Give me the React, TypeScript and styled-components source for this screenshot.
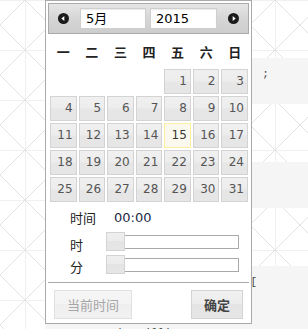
import React from 'react'
import styled, { createGlobalStyle } from 'styled-components'

const GlobalStyle = createGlobalStyle`
  html, body {
    margin: 0;
    padding: 0;
    background: #fff;
    overflow: hidden;
  }
  body {
    font-family: "DejaVu Sans", "Noto Sans CJK SC", sans-serif;
  }
`

const Page = styled.div`
  position: relative;
  width: 308px;
  height: 329px;
  overflow: hidden;
  background-color: #fff;
  background-image:
    linear-gradient(45deg, transparent calc(50% - 0.6px), #e2e2e2 50%, transparent calc(50% + 0.6px)),
    linear-gradient(-45deg, transparent calc(50% - 0.6px), #e2e2e2 50%, transparent calc(50% + 0.6px)),
    linear-gradient(90deg, transparent 25px, #f0f0f0 25px, #f0f0f0 26px, transparent 26px),
    linear-gradient(180deg, #f0f0f0 0, #f0f0f0 1px, transparent 1px);
  background-size: 50px 50px;
  background-position: 0 25px, 0 25px, 0 0, 0 0;
`

const CodeColumn = styled.div`
  display: flex;
  flex-direction: column;
  margin-left: 45px;
`

const Gap = styled.div<{ $h: number }>`
  height: ${p => p.$h}px;
`

const CodeBlock = styled.pre<{ $h: number; $lh?: number; $pt?: number; $pl?: number }>`
  margin: 0;
  height: ${p => p.$h}px;
  box-sizing: border-box;
  padding: ${p => p.$pt ?? 9}px 0 0 ${p => p.$pl ?? 14}px;
  background: #f5f5f5;
  color: #444;
  font-family: "Liberation Mono", monospace;
  font-size: 11px;
  line-height: ${p => p.$lh ?? 15.5}px;
  white-space: pre;
  overflow: hidden;
`

const Popup = styled.div`
  position: absolute;
  left: 45px;
  top: 0;
  width: 207px;
  box-sizing: border-box;
  border: 1px solid #aaa;
  padding: 2px;
  background: #fff;
`

const Header = styled.div`
  display: flex;
  align-items: center;
  height: 31px;
  box-sizing: border-box;
  border: 1px solid #aaa;
  background: linear-gradient(#e6e6e6, #d6d6d6 50%, #cdcdcd);
`

const NavBtn = styled.span<{ $ml: number }>`
  display: flex;
  width: 11px;
  height: 11px;
  margin-left: ${p => p.$ml}px;
`

const Select = styled.div<{ $w: number; $ml: number }>`
  width: ${p => p.$w}px;
  height: 21px;
  margin-left: ${p => p.$ml}px;
  box-sizing: border-box;
  border: 1px solid #cfcfcf;
  box-shadow: inset 0 1px 1px rgba(0, 0, 0, 0.08);
  background: #fff;
  padding-left: 5px;
  font-size: 13px;
  line-height: 19px;
  color: #000;
`

const Body = styled.div`
  padding: 0 1px 0 2px;
`

const WeekRow = styled.div`
  display: grid;
  grid-template-columns: repeat(7, 1fr);
  column-gap: 2px;
  height: 35px;
  align-items: center;
  justify-items: center;
  font-size: 13px;
  font-weight: bold;
  color: #222;
`

const DayGrid = styled.div`
  display: grid;
  grid-template-columns: repeat(7, 1fr);
  grid-auto-rows: 25px;
  gap: 2px;
`

const Day = styled.div<{ $today?: boolean }>`
  box-sizing: border-box;
  border: 1px solid ${p => (p.$today ? '#fcefa1' : '#d3d3d3')};
  background: ${p =>
    p.$today ? '#fbf9ee' : 'linear-gradient(#f0f0f0, #ededed 45%, #e6e6e6 55%, #e6e6e6)'};
  color: ${p => (p.$today ? '#363636' : '#555')};
  font-size: 12px;
  line-height: 23px;
  text-align: right;
  padding-right: 3px;
`

const TimeSection = styled.div`
  padding-left: 22px;
  margin-top: 2px;
  font-size: 13px;
  color: #222;
`

const TimeRow = styled.div`
  display: flex;
  align-items: center;
  height: 26px;
`

const TimeLabel = styled.span<{ $w: number; $drop?: number }>`
  width: ${p => p.$w}px;
  padding-top: ${p => p.$drop ?? 0}px;
`

const TimeValue = styled.span`
  color: #1d2a44;
`

const SliderRow = styled.div`
  display: flex;
  align-items: center;
  height: 23px;
`

const Track = styled.div`
  position: relative;
  width: 133px;
  height: 14px;
  box-sizing: border-box;
  border: 1px solid #aaa;
  background: #fff;
`

const Handle = styled.span`
  position: absolute;
  left: -1px;
  top: -4px;
  width: 19px;
  height: 19px;
  box-sizing: border-box;
  border: 1px solid #d3d3d3;
  background: linear-gradient(#efefef, #ebebeb 50%, #e4e4e4 50%, #e6e6e6);
`

const ButtonPane = styled.div`
  display: flex;
  justify-content: space-between;
  margin-top: 6px;
  border-top: 1px solid #aaa;
  padding: 7px 6px 2px;
`

const Button = styled.div<{ $disabled?: boolean }>`
  height: 29px;
  box-sizing: border-box;
  padding: 0 12px;
  border: 1px solid ${p => (p.$disabled ? '#e0e0e0' : '#d3d3d3')};
  background: ${p =>
    p.$disabled
      ? 'linear-gradient(#f6f6f6, #f3f3f3 50%, #efefef 50%, #f1f1f1)'
      : 'linear-gradient(#f1f1f1, #ececec 50%, #e4e4e4 50%, #e6e6e6)'};
  color: ${p => (p.$disabled ? '#a6a6a6' : '#444')};
  font-weight: ${p => (p.$disabled ? 'normal' : 'bold')};
  font-family: "Noto Sans CJK SC", sans-serif;
  font-size: 13px;
  line-height: 27px;
`

const Arrow = ({ dir }: { dir: 'prev' | 'next' }) => (
  <svg width="11" height="11" viewBox="0 0 11 11">
    <circle cx="5.5" cy="5.5" r="5.5" fill="#1b1b1b" />
    {dir === 'prev' ? (
      <path d="M3.3 5.5 L6.3 3 L6.3 8 Z" fill="#fff" />
    ) : (
      <path d="M7.7 5.5 L4.7 3 L4.7 8 Z" fill="#fff" />
    )}
  </svg>
)

const weekdays = ['一', '二', '三', '四', '五', '六', '日']

// May 2015 starts on a Friday
const cells: (number | null)[] = [null, null, null, null]
for (let d = 1; d <= 31; d++) cells.push(d)

const App = () => {
  return (
    <Page>
      <GlobalStyle />
      <CodeColumn>
        <Gap $h={58} />
        <CodeBlock $h={46} $pl={6}>{"$('#example').datetimepicker()  ;"}</CodeBlock>
        <Gap $h={58} />
        <CodeBlock $h={46}>{"$('#ex2').datetimepicker({\n});"}</CodeBlock>
        <Gap $h={58} />
        <CodeBlock $h={63} $lh={17} $pt={8}>
          {"$('#timezone_example').val = [\n  hour: 0,\n  minute: 0,\n        showMillisec: true,"}
        </CodeBlock>
      </CodeColumn>

      <Popup>
        <Header>
          <NavBtn $ml={9}>
            <Arrow dir="prev" />
          </NavBtn>
          <Select $w={66} $ml={11}>5月</Select>
          <Select $w={67} $ml={4}>2015</Select>
          <NavBtn $ml={11}>
            <Arrow dir="next" />
          </NavBtn>
        </Header>

        <Body>
          <WeekRow>
            {weekdays.map(w => (
              <span key={w}>{w}</span>
            ))}
          </WeekRow>
          <DayGrid>
            {cells.map((d, i) =>
              d === null ? <span key={i} /> : <Day key={i} $today={d === 15}>{d}</Day>
            )}
          </DayGrid>
        </Body>

        <TimeSection>
          <TimeRow>
            <TimeLabel $w={44}>时间</TimeLabel>
            <TimeValue>00:00</TimeValue>
          </TimeRow>
          <SliderRow>
            <TimeLabel $w={36} $drop={6}>时</TimeLabel>
            <Track>
              <Handle />
            </Track>
          </SliderRow>
          <SliderRow>
            <TimeLabel $w={36} $drop={4}>分</TimeLabel>
            <Track>
              <Handle />
            </Track>
          </SliderRow>
        </TimeSection>

        <ButtonPane>
          <Button $disabled>当前时间</Button>
          <Button>确定</Button>
        </ButtonPane>
      </Popup>
    </Page>
  )
}

export default App
